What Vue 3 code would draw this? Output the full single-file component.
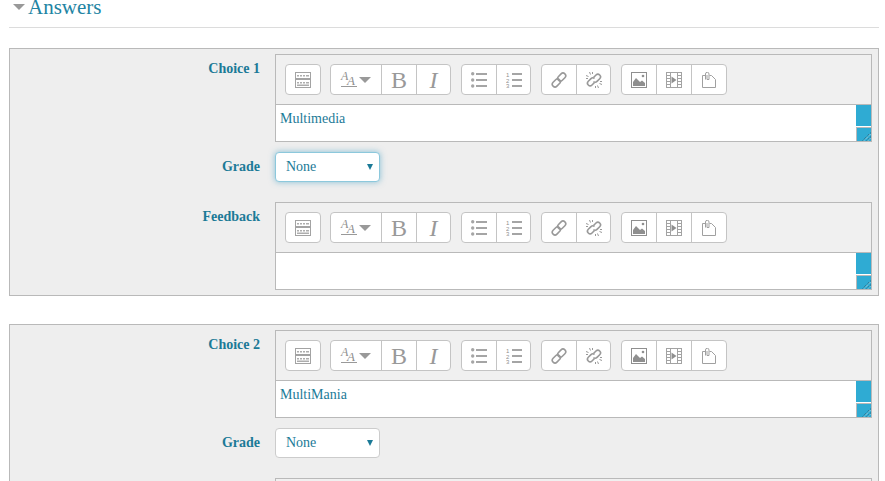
<script setup>
const choices = [
  { label: 'Choice 1', text: 'Multimedia', focused: true },
  { label: 'Choice 2', text: 'MultiMania', focused: false },
];

const groups = [
  { name: 'g-toggle', buttons: ['toggle'] },
  { name: 'g-text', buttons: ['size', 'bold', 'italic'] },
  { name: 'g-list', buttons: ['ul', 'ol'] },
  { name: 'g-link', buttons: ['link', 'unlink'] },
  { name: 'g-media', buttons: ['image', 'video', 'file'] },
];
</script>

<template>
  <div class="page">
    <svg class="sprites" aria-hidden="true">
      <symbol id="i-toggle" viewBox="0 0 16 16">
        <rect x="0.5" y="0.5" width="15" height="6" fill="none" stroke="#a3a3a3" />
        <rect x="0.5" y="7.5" width="15" height="8" fill="none" stroke="#a3a3a3" />
        <path d="M2 3h2v1.500H2zM5 3h2v1.500H5zM8 3h2v1.500H8zM11 3h3v1.500h-3zM2 10h2v1.500H2zM5 10h2v1.500H5zM8 10h2v1.500H8zM11 10h3v1.500h-3zM2 12.500h12V14H2z" fill="#adadad" />
      </symbol>
      <symbol id="i-ul" viewBox="0 0 16 16">
        <circle cx="1.700" cy="1.700" r="1.700" fill="#a5a5a5" />
        <circle cx="1.700" cy="8" r="1.700" fill="#a5a5a5" />
        <circle cx="1.700" cy="14" r="1.700" fill="#a5a5a5" />
        <path d="M5 1h11v2H5zM5 7h11v2H5zM5 13h11v2H5z" fill="#a5a5a5" />
      </symbol>
      <symbol id="i-link" viewBox="0 0 16 16">
        <g fill="none" stroke="#999" stroke-width="1.600">
          <rect x="6.200" y="2.400" width="9" height="5.400" rx="2.700" transform="rotate(-45 10.700 5.100)" />
          <rect x="0.800" y="8.200" width="9" height="5.400" rx="2.700" transform="rotate(-45 5.300 10.900)" />
        </g>
      </symbol>
      <symbol id="i-unlink" viewBox="0 0 16 16">
        <g fill="none" stroke="#999" stroke-width="1.600">
          <path d="M7.500 5.500 10 3a2.600 2.600 0 0 1 3.700 3.700L11 9.400a2.600 2.600 0 0 1-3.500.1" />
          <path d="M8.500 10.500 6 13a2.600 2.600 0 0 1-3.700-3.700L5 6.600a2.600 2.600 0 0 1 3.500-.1" />
        </g>
        <path d="M3.500 0l1 2.500M0 3.500l2.500 1M12.500 16l-1-2.500M16 12.500l-2.500-1M6.500 0v2M0 6.500h2M9.500 14v2M14 9.500h2" stroke="#999" stroke-width="1" fill="none" />
      </symbol>
      <symbol id="i-image" viewBox="0 0 16 16">
        <rect x="0.500" y="0.500" width="15" height="15" fill="#fff" stroke="#8f8f8f" />
        <path d="M2 14V10l3-4 4 4 2-1.500 3 2.500v3z" fill="#8f8f8f" />
        <circle cx="12" cy="4" r="1.300" fill="#8f8f8f" />
      </symbol>
      <symbol id="i-video" viewBox="0 0 16 16">
        <rect x="0.500" y="0.500" width="15" height="15" fill="#fff" stroke="#a3a3a3" />
        <path d="M4.500 0v16M11.500 0v16" stroke="#a3a3a3" />
        <path d="M1 3.500h3M1 6.500h3M1 9.500h3M1 12.500h3M12 3.500h3M12 6.500h3M12 9.500h3M12 12.500h3" stroke="#a3a3a3" />
        <path d="M5.500 4.500l5 3.500-5 3.500z" fill="#8f8f8f" />
      </symbol>
      <symbol id="i-file" viewBox="0 0 14 16">
        <path d="M3 3.500H.5v12h13v-8l-4-4H7.500" fill="none" stroke="#a0a0a0" />
        <path d="M3.500 7.500V2a1.700 1.700 0 0 1 3.500 0v5.500H5V3" fill="none" stroke="#a0a0a0" />
      </symbol>
    </svg>

    <header class="section-head">
      <span class="caret"></span>
      <h3>Answers</h3>
    </header>

    <section v-for="choice in choices" :key="choice.label" class="answer">
      <div class="row">
        <label class="row-label">{{ choice.label }}</label>
        <div class="editor">
          <div class="toolbar">
            <div v-for="group in groups" :key="group.name" class="group" :class="group.name">
              <span v-for="btn in group.buttons" :key="btn" class="btn" :class="'btn-' + btn">
                <span v-if="btn === 'size'" class="size-icon">
                  <span class="aa"><i class="a1">A</i><i class="a2">A</i></span>
                  <span class="size-arrow"></span>
                </span>
                <span v-else-if="btn === 'bold'" class="glyph">B</span>
                <span v-else-if="btn === 'italic'" class="glyph glyph-i">I</span>
                <svg v-else-if="btn === 'ol'" class="icon" viewBox="0 0 16 16">
                  <text x="0" y="5" class="ol-num">1</text>
                  <text x="0" y="10.500" class="ol-num">2</text>
                  <text x="0" y="15.500" class="ol-num">3</text>
                  <path d="M6 1h10v2H6zM6 7h10v2H6zM6 13h10v2H6z" fill="#a5a5a5" />
                </svg>
                <svg v-else class="icon"><use :href="'#i-' + btn" /></svg>
              </span>
            </div>
          </div>
          <div class="content">
            <div class="content-text">{{ choice.text }}</div>
            <div class="resize-bar">
              <span class="bar-top"></span>
              <span class="bar-bottom">
                <svg width="14" height="14" viewBox="0 0 14 14">
                  <path d="M6 13.500 13.500 6M10 13.500 13.500 10" stroke="#10384a" stroke-width="1" stroke-dasharray="1 1" fill="none" />
                  <path d="M7 13.500 13.500 7M11 13.500 13.500 11" stroke="#dff1f7" stroke-width="1" stroke-dasharray="1 1" fill="none" />
                </svg>
              </span>
            </div>
          </div>
        </div>
      </div>

      <div class="row row-grade">
        <label class="row-label">Grade</label>
        <div class="select-wrap">
          <select class="grade" :class="{ focused: choice.focused }">
            <option>None</option>
          </select>
        </div>
      </div>

      <div class="row row-feedback">
        <label class="row-label">Feedback</label>
        <div class="editor">
          <div class="toolbar">
            <div v-for="group in groups" :key="group.name" class="group" :class="group.name">
              <span v-for="btn in group.buttons" :key="btn" class="btn" :class="'btn-' + btn">
                <span v-if="btn === 'size'" class="size-icon">
                  <span class="aa"><i class="a1">A</i><i class="a2">A</i></span>
                  <span class="size-arrow"></span>
                </span>
                <span v-else-if="btn === 'bold'" class="glyph">B</span>
                <span v-else-if="btn === 'italic'" class="glyph glyph-i">I</span>
                <svg v-else-if="btn === 'ol'" class="icon" viewBox="0 0 16 16">
                  <text x="0" y="5" class="ol-num">1</text>
                  <text x="0" y="10.500" class="ol-num">2</text>
                  <text x="0" y="15.500" class="ol-num">3</text>
                  <path d="M6 1h10v2H6zM6 7h10v2H6zM6 13h10v2H6z" fill="#a5a5a5" />
                </svg>
                <svg v-else class="icon"><use :href="'#i-' + btn" /></svg>
              </span>
            </div>
          </div>
          <div class="content">
            <div class="content-text"></div>
            <div class="resize-bar">
              <span class="bar-top"></span>
              <span class="bar-bottom">
                <svg width="14" height="14" viewBox="0 0 14 14">
                  <path d="M6 13.500 13.500 6M10 13.500 13.500 10" stroke="#10384a" stroke-width="1" stroke-dasharray="1 1" fill="none" />
                  <path d="M7 13.500 13.500 7M11 13.500 13.500 11" stroke="#dff1f7" stroke-width="1" stroke-dasharray="1 1" fill="none" />
                </svg>
              </span>
            </div>
          </div>
        </div>
      </div>
    </section>
  </div>
</template>

<style>
html, body {
  margin: 0;
  background: #fff;
  overflow: hidden;
}
</style>

<style scoped>
.page {
  width: 885px;
  height: 481px;
  overflow: hidden;
  box-sizing: border-box;
  padding: 0 6px 0 9px;
  font-family: "Liberation Serif", "Times New Roman", serif;
  font-size: 14px;
  color: #1b7a97;
}

.sprites {
  position: absolute;
  width: 0;
  height: 0;
}

.section-head {
  height: 27px;
  margin-bottom: 20px;
  border-bottom: 1px solid #dcdcdc;
  display: flex;
  align-items: flex-end;
  padding-left: 4px;
}

.section-head h3 {
  margin: 0 0 7px 3px;
  font-size: 21px;
  line-height: 26px;
  font-weight: normal;
  color: #2284a3;
}

.caret {
  width: 0;
  height: 0;
  margin-bottom: 17px;
  border-left: 6px solid transparent;
  border-right: 6px solid transparent;
  border-top: 6px solid #999;
}

.answer {
  width: 870px;
  box-sizing: border-box;
  margin-bottom: 28px;
  padding: 5px 6px 5px 0;
  background: #eee;
  border: 1px solid #b9b9b9;
}

.row {
  display: flex;
}

.row-grade {
  margin-top: 10px;
  margin-bottom: 20px;
}

.row-label {
  width: 250px;
  margin-right: 15px;
  padding-top: 6px;
  text-align: right;
  white-space: nowrap;
  font-weight: bold;
  color: #1b7a97;
  line-height: 18px;
}

.editor {
  width: 597px;
  height: 88px;
  box-sizing: border-box;
  border: 1px solid #b9b9b9;
  background: #f0f0f0;
  display: flex;
  flex-direction: column;
}

.toolbar {
  height: 50px;
  flex-shrink: 0;
  box-sizing: border-box;
  padding: 9px 0 0 9px;
  display: flex;
  gap: 10px;
  border-bottom: 1px solid #b9b9b9;
}

.group {
  height: 31px;
  box-sizing: border-box;
  flex-shrink: 0;
  display: flex;
  background: #fff;
  border: 1px solid #c4c4c4;
  border-radius: 4px;
}

.g-toggle { width: 36px; margin-right: -1px; }
.g-text { width: 121px; }
.g-list { width: 70px; }
.g-link { width: 70px; }
.g-media { width: 106px; }

.btn {
  width: 35px;
  box-sizing: border-box;
  display: flex;
  align-items: center;
  justify-content: center;
  border-right: 1px solid #c4c4c4;
}

.btn:last-child {
  flex: 1;
  border-right: none;
}

.btn-size {
  width: 51px;
}

.glyph {
  font-size: 24px;
  line-height: 1;
  color: #999;
}

.glyph-i {
  font-style: italic;
}

.size-icon {
  display: flex;
  align-items: center;
  gap: 2px;
}

.aa {
  position: relative;
  width: 16px;
  height: 15px;
  border-bottom: 1px solid #999;
  box-sizing: border-box;
}

.aa i {
  position: absolute;
  color: #8f8f8f;
  line-height: 1;
}

.a1 {
  left: 0;
  top: -2px;
  font-size: 12px;
}

.a2 {
  left: 6px;
  top: 2px;
  font-size: 13px;
}

.size-arrow {
  width: 0;
  height: 0;
  border-left: 6px solid transparent;
  border-right: 6px solid transparent;
  border-top: 6px solid #999;
}

.icon {
  width: 16px;
  height: 16px;
}

.ol-num {
  font: 6px "Liberation Sans", Arial, sans-serif;
  fill: #8f8f8f;
}

.content {
  flex: 1;
  display: flex;
  background: #fff;
  min-height: 0;
}

.content-text {
  flex: 1;
  padding: 5px 4px;
  line-height: 18px;
}

.resize-bar {
  width: 15px;
  display: flex;
  flex-direction: column;
}

.bar-top {
  height: 21px;
  background: #2fabd3;
}

.bar-bottom {
  margin-top: 1px;
  flex: 1;
  background: #2fabd3;
  border-left: 1px solid #b9b9b9;
  border-top: 1px solid #b9b9b9;
  overflow: hidden;
  display: flex;
  justify-content: flex-end;
  align-items: flex-end;
}

.select-wrap {
  position: relative;
  width: 105px;
  height: 30px;
}

.select-wrap::after {
  content: "";
  position: absolute;
  right: 7px;
  top: 12px;
  border-left: 3px solid transparent;
  border-right: 3px solid transparent;
  border-top: 6px solid #1b7a97;
  pointer-events: none;
}

.grade {
  appearance: none;
  width: 100%;
  height: 100%;
  box-sizing: border-box;
  padding: 0 10px 2px;
  background: #fff;
  border: 1px solid #ccc;
  border-radius: 4px;
  font: 14px "Liberation Serif", "Times New Roman", serif;
  color: #1b7a97;
}

.grade.focused {
  border-color: #8cc8dc;
  box-shadow: 0 0 6px rgba(47, 150, 190, 0.55);
}
</style>
